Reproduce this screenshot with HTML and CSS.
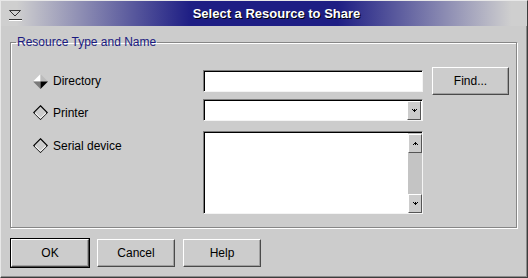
FILE: index.html
```html
<!DOCTYPE html>
<html lang="en">

<head>
    <meta charset="UTF-8">
    <title>Select a Resource to Share</title>
    <link rel="stylesheet" href="styles.css">
</head>

<body>
    <div class="dialog">
        <div class="titlebar">
            <span class="menu-icon">
                <svg width="14" height="12" viewBox="0 0 14 12">
                    <polygon points="1.5,1.5 12.5,1.5 7,7" fill="none" stroke="#333" />
                    <line x1="1" y1="10.5" x2="14" y2="10.5" stroke="#333" />
                    <line x1="1" y1="11.5" x2="14" y2="11.5" stroke="#fff" />
                </svg>
            </span>
            <span class="title">Select a Resource to Share</span>
        </div>

        <fieldset class="group">
            <legend>Resource Type and Name</legend>
            <div class="group-body">
                <div class="row">
                    <label class="radio">
                        <svg class="diamond" width="15" height="15" viewBox="0 0 14 14">
                            <polygon points="0,7 7,0 7,7" fill="#fff" />
                            <polygon points="7,0 14,7 7,7" fill="#bcbcbc" />
                            <polygon points="0,7 7,14 7,7" fill="#7a7a7a" />
                            <polygon points="7,7 14,7 7,14" fill="#000" />
                        </svg>
                        Directory
                    </label>
                    <div class="field"></div>
                    <button class="btn find">Find...</button>
                </div>

                <div class="row row-printer">
                    <label class="radio">
                        <svg class="diamond" width="15" height="15" viewBox="0 0 14 14">
                            <polygon points="7,0.7 13.3,7 7,13.3 0.7,7" fill="none" stroke="#000" />
                            <polyline points="2,7.6 7,12.4 12,7.6" fill="none" stroke="#fff" />
                        </svg>
                        Printer
                    </label>
                    <div class="field combo">
                        <span class="arrow-btn">
                            <svg width="5" height="3" viewBox="0 0 5 3">
                                <rect x="0" y="0" width="1" height="1" /><rect x="2" y="0" width="1" height="1" /><rect x="4" y="0" width="1" height="1" />
                                <rect x="1" y="1" width="3" height="1" /><rect x="2" y="2" width="1" height="1" />
                            </svg>
                        </span>
                    </div>
                </div>

                <div class="row row-serial">
                    <label class="radio">
                        <svg class="diamond" width="15" height="15" viewBox="0 0 14 14">
                            <polygon points="7,0.7 13.3,7 7,13.3 0.7,7" fill="none" stroke="#000" />
                            <polyline points="2,7.6 7,12.4 12,7.6" fill="none" stroke="#fff" />
                        </svg>
                        Serial device
                    </label>
                    <div class="field list">
                        <div class="list-body"></div>
                        <div class="scrollbar">
                            <span class="arrow-btn">
                                <svg width="5" height="3" viewBox="0 0 5 3">
                                    <rect x="2" y="0" width="1" height="1" /><rect x="1" y="1" width="3" height="1" />
                                    <rect x="0" y="2" width="1" height="1" /><rect x="2" y="2" width="1" height="1" /><rect x="4" y="2" width="1" height="1" />
                                </svg>
                            </span>
                            <span class="arrow-btn">
                                <svg width="5" height="3" viewBox="0 0 5 3">
                                    <rect x="0" y="0" width="1" height="1" /><rect x="2" y="0" width="1" height="1" /><rect x="4" y="0" width="1" height="1" />
                                    <rect x="1" y="1" width="3" height="1" /><rect x="2" y="2" width="1" height="1" />
                                </svg>
                            </span>
                        </div>
                    </div>
                </div>
            </div>
        </fieldset>

        <div class="buttons">
            <button class="btn default">OK</button>
            <button class="btn">Cancel</button>
            <button class="btn">Help</button>
        </div>
    </div>
</body>

</html>
```

FILE: styles.css
```css
* {
    box-sizing: border-box;
}

body {
    margin: 0;
    background-color: #cccccc;
    color: #000;
    font-family: "Liberation Sans", Arial, sans-serif;
    font-size: 12px;
}

.dialog {
    width: 528px;
    height: 278px;
    display: flex;
    flex-direction: column;
    background-color: #cccccc;
    border: 1px solid;
    border-color: #e8e8e8 #3c3c3c #3c3c3c #e8e8e8;
    box-shadow: inset -1px -1px 0 #8c8c8c;
}

/* title bar */
.titlebar {
    height: 25px;
    display: flex;
    align-items: center;
    background: linear-gradient(to right, #cfcfcf 3%, #1e1e84 36%, #1e1e84 64%, #cfcfcf 97%);
}

.menu-icon {
    width: 25px;
    padding-left: 7px;
    padding-top: 3px;
    display: flex;
}

.title {
    flex: 1;
    text-align: center;
    color: #fff;
    font-weight: bold;
    font-size: 13px;
    text-shadow: 1px 1px 0 #000;
}

/* group box */
.group {
    margin: 9px 10px 0 9px;
    padding: 0;
    min-width: 0;
    border: 1px solid #868686;
    box-shadow: inset 1px 1px 0 #fff, 1px 1px 0 #fff;
}

.group legend {
    margin-left: 5px;
    padding: 0 1px;
    line-height: 14px;
    color: #1a1a80;
}

.group-body {
    padding: 18px 0 13px 22px;
}

.row {
    display: flex;
    align-items: center;
}

.row-printer {
    margin-top: 4px;
}

.row-serial {
    margin-top: 10px;
    align-items: flex-start;
}

.radio {
    width: 170px;
    display: flex;
    align-items: center;
    gap: 5px;
    line-height: 14px;
}

.diamond {
    flex: none;
}

.row-printer .radio {
    padding-top: 5px;
}

.row-serial .radio {
    margin-top: 7px;
}

/* sunken inputs */
.field {
    width: 220px;
    height: 22px;
    background-color: #fff;
    border: 1px solid;
    border-color: #7c7c7c #f4f4f4 #f4f4f4 #7c7c7c;
    box-shadow: inset 1px 1px 0 #000;
}

.combo {
    display: flex;
    justify-content: flex-end;
    align-items: center;
    padding-right: 1px;
}

.list {
    height: 83px;
    display: flex;
}

.list-body {
    flex: 1;
}

.scrollbar {
    width: 14px;
    margin-top: 1px;
    padding-top: 1px;
    display: flex;
    flex-direction: column;
    justify-content: space-between;
    background-color: #c4c4c4;
}

.arrow-btn {
    width: 14px;
    height: 19px;
    flex: none;
    display: flex;
    align-items: center;
    justify-content: center;
    background-color: #cccccc;
    border: 1px solid;
    border-color: #fff #555 #555 #fff;
}

/* push buttons */
.btn {
    width: 78px;
    height: 28px;
    padding: 0;
    background-color: #cccccc;
    border: 1px solid;
    border-color: #fff #4a4a4a #4a4a4a #fff;
    box-shadow: inset -1px -1px 0 #a0a0a0;
    font: inherit;
    color: #000;
}

.find {
    width: 77px;
    margin-left: 9px;
}

.buttons {
    display: flex;
    gap: 8px;
    margin: 11px 0 0 10px;
}

.default {
    outline: 1px solid #000;
}
```
